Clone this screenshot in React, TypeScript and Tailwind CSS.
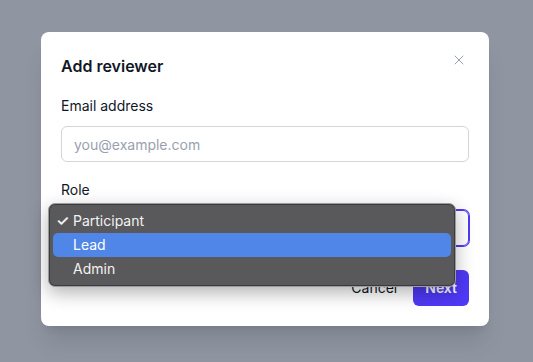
import { X } from "lucide-react";

const roles = ["Participant", "Lead", "Admin"];

export default function App() {
  const selected = "Participant";
  const highlighted = "Lead";

  return (
    <div
      className="h-[362px] w-full bg-gray-500/75 pt-8 pl-[41px]"
      style={{ fontFamily: "Inter, 'Liberation Sans', sans-serif" }}
    >
      <div className="relative w-[448px] rounded-lg bg-white px-5 pt-[22px] pb-5 shadow-xl">
        <div className="flex items-start justify-between">
          <h2 className="text-base leading-6 font-semibold text-gray-900">Add reviewer</h2>
          <button className="-mt-[2px] mr-[2px] text-gray-400">
            <X className="size-4" strokeWidth={1.5} />
          </button>
        </div>

        <label className="mt-[18px] block text-sm leading-5 text-gray-900">Email address</label>
        <input
          className="mt-[10px] block h-9 w-full rounded-md border border-gray-300 px-3 text-sm text-gray-900 placeholder:text-gray-400 focus:outline-none"
          placeholder="you@example.com"
        />

        <label className="mt-[18px] block text-sm leading-5 text-gray-900">Role</label>
        <div className="mt-[10px] flex h-9 w-full items-center rounded-md border border-indigo-600 px-3 text-sm text-gray-900 ring-1 ring-indigo-600">
          {selected}
        </div>

        <div className="mt-6 flex items-center justify-end gap-1">
          <button className="px-3 text-sm leading-9 text-gray-900">Cancel</button>
          <button className="h-9 rounded-md bg-indigo-600 px-3 text-sm font-semibold text-white">
            Next
          </button>
        </div>

        {/* native select popup */}
        <div className="absolute top-[171px] left-[7px] w-[408px] rounded-[7px] border border-[#9c9ca0] bg-[#59595b] py-[5px] shadow-[0_6px_18px_rgba(0,0,0,0.3)] ring-1 ring-[#3a3a3c] ring-inset">
          {roles.map((role) => (
            <div
              key={role}
              className={`relative mx-[4px] flex h-6 items-center rounded-[5px] pl-5 text-sm text-[#f2f2f2] ${
                role === highlighted ? "bg-[#4f86e8] text-white" : ""
              }`}
            >
              {role === selected && (
                <span className="absolute left-[3px] text-[15px] font-semibold text-[#f2f2f2]">
                  ✓
                </span>
              )}
              {role}
            </div>
          ))}
        </div>
      </div>
    </div>
  );
}
